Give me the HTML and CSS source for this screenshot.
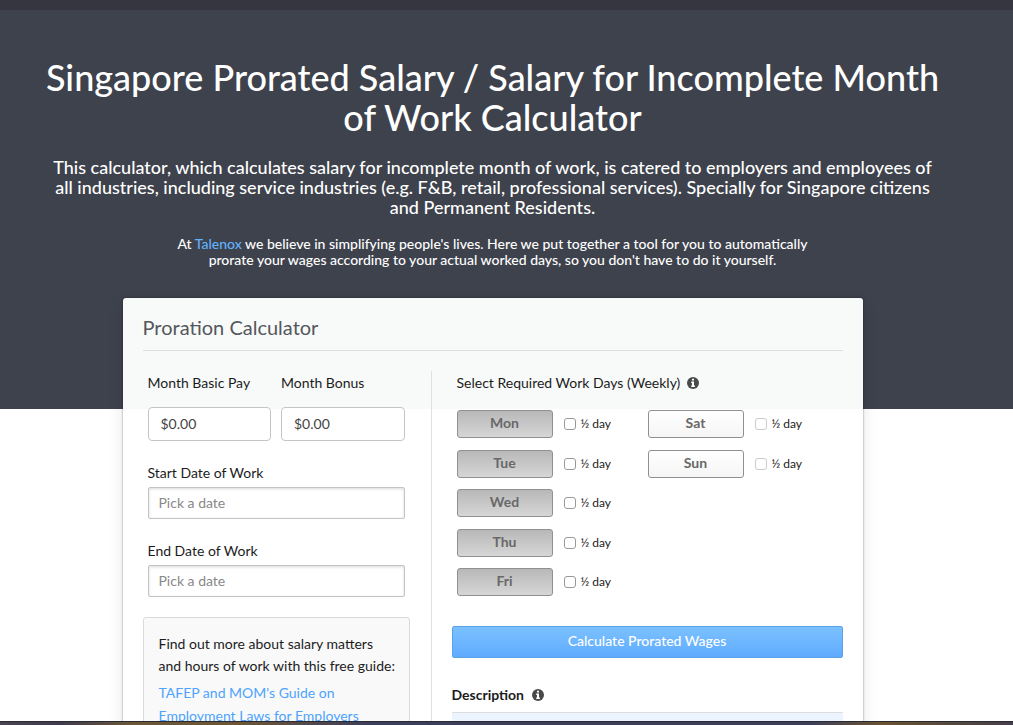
FILE: index.html
```html
<!DOCTYPE html>
<html lang="en">
<head>
<meta charset="utf-8">
<title>Singapore Prorated Salary Calculator</title>
<link rel="stylesheet" href="styles.css">
</head>
<body>
<svg class="sprite" aria-hidden="true">
  <symbol id="info" viewBox="0 0 12 12">
    <circle cx="6" cy="6" r="6" fill="#4a4a4a"/>
    <path fill="#fff" d="M5 1.800h2v1.700H5zM4.200 4.600H7v3.900h.9v1.400H4.200V8.500H5V6h-.8z"/>
  </symbol>
</svg>
<main class="page">
  <div class="topbar"></div>
  <header class="hero">
    <h1>Singapore Prorated Salary / Salary for Incomplete Month<br>of Work Calculator</h1>
    <p class="lead">This calculator, which calculates salary for incomplete month of work, is catered to employers and employees of<br>all industries, including service industries (e.g. F&amp;B, retail, professional services). Specially for Singapore citizens<br>and Permanent Residents.</p>
    <p class="intro">At <a href="#">Talenox</a> we believe in simplifying people's lives. Here we put together a tool for you to automatically<br>prorate your wages according to your actual worked days, so you don't have to do it yourself.</p>
  </header>
  <form class="card">
    <h2>Proration Calculator</h2>
    <div class="columns">
      <div class="left">
        <div class="fields">
          <div class="pair">
            <div class="money"><label for="pay">Month Basic Pay</label><input id="pay" type="text" value="$0.00"></div>
            <div class="money"><label for="bonus">Month Bonus</label><input id="bonus" type="text" value="$0.00"></div>
          </div>
          <div class="date"><label for="start">Start Date of Work</label><input id="start" type="text" placeholder="Pick a date"></div>
          <div class="date"><label for="end">End Date of Work</label><input id="end" type="text" placeholder="Pick a date"></div>
        </div>
        <aside class="guide">
          <p>Find out more about salary matters<br>and hours of work with this free guide:</p>
          <a href="#">TAFEP and MOM's Guide on<br>Employment Laws for Employers</a>
        </aside>
      </div>
      <div class="right">
        <div class="days-title">Select Required Work Days (Weekly) <svg class="info"><use href="#info"/></svg></div>
        <div class="days">
          <div class="day"><button type="button" class="toggle on">Mon</button><label><input type="checkbox">½ day</label></div>
          <div class="day"><button type="button" class="toggle on">Tue</button><label><input type="checkbox">½ day</label></div>
          <div class="day"><button type="button" class="toggle on">Wed</button><label><input type="checkbox">½ day</label></div>
          <div class="day"><button type="button" class="toggle on">Thu</button><label><input type="checkbox">½ day</label></div>
          <div class="day"><button type="button" class="toggle on">Fri</button><label><input type="checkbox">½ day</label></div>
          <div class="day"><button type="button" class="toggle">Sat</button><label><input type="checkbox" disabled>½ day</label></div>
          <div class="day"><button type="button" class="toggle">Sun</button><label><input type="checkbox" disabled>½ day</label></div>
        </div>
        <button type="button" class="calculate">Calculate Prorated Wages</button>
        <h3>Description <svg class="info"><use href="#info"/></svg></h3>
        <div class="results"></div>
      </div>
    </div>
  </form>
</main>
<div class="backdrop"></div>
</body>
</html>
```
FILE: styles.css
```css
* { box-sizing: border-box; }
body {
  margin: 0;
  height: 100vh;
  display: flex;
  flex-direction: column;
  overflow: hidden;
  font: 14px/24px Lato, "Open Sans", sans-serif;
  color: #1c1c1c;
  background: #fff;
}
h1, h2, h3, p { margin: 0; font-weight: 400; }
a { color: #4da3ff; text-decoration: none; }
input, button { font: inherit; }
.sprite { display: none; }
.page { flex: 1; min-height: 0; overflow: hidden; }
.topbar { height: 10px; background: #35363f; }
.hero {
  padding: 47px 28px 141px 0;
  background: #3e424c;
  color: #fff;
  text-align: center;
  white-space: nowrap;
}
h1 { font-size: 36px; line-height: 40px; font-weight: 500; }
.lead { margin-top: 20px; font-size: 18px; line-height: 20px; font-weight: 500; }
.intro { margin-top: 19px; font-size: 14px; line-height: 16px; font-weight: 500; }
.intro a { color: #62b1ff; }
.card {
  position: relative;
  width: calc(100% - 68px);
  max-width: 740px;
  margin: -111px auto 0;
  left: -14px;
  padding: 15px 20px 40px;
  border-radius: 3px;
  background: linear-gradient(#f8faf9 111px, #fff 111px);
  box-shadow: 0 0 2px rgba(0, 0, 0, .5), 0 4px 16px rgba(0, 0, 0, .1);
}
h2 {
  padding-bottom: 9px;
  border-bottom: 1px solid #dcdfe0;
  font-size: 20px;
  line-height: 28px;
  color: #54575c;
}
.columns { display: flex; margin-top: 20px; }
.left { width: 289px; padding-right: 21px; border-right: 1px solid #e0e0e0; }
.fields { display: flex; flex-direction: column; gap: 20px; padding: 0 5px; }
.pair { display: flex; gap: 10px; }
.money { flex: 1; }
.fields label { display: block; }
.fields input {
  display: block;
  width: 100%;
  border: 1px solid #c4c4c4;
  background: #fff;
  outline: 0;
}
.money input { height: 34px; margin-top: 12px; padding: 0 12px 2px; border-radius: 4px; color: #444; }
.date input {
  height: 32px;
  margin-top: 2px;
  padding: 0 10px 2px;
  border-radius: 2px;
  box-shadow: inset 0 1px 3px rgba(0, 0, 0, .15);
}
.date input::placeholder { color: #888; opacity: 1; }
.guide {
  margin-top: 20px;
  padding: 15px;
  border: 1px solid #dadada;
  border-radius: 3px;
  background: #f9f9f9;
  line-height: 22px;
  white-space: nowrap;
}
.guide a { display: block; margin-top: 4px; line-height: 23px; }
.right { flex: 1; padding-left: 20px; }
.days-title { padding-left: 5px; }
.info { width: 12px; height: 12px; margin-left: 3px; vertical-align: -1px; }
.days {
  display: grid;
  grid-template-rows: repeat(5, 28px);
  grid-auto-flow: column;
  grid-auto-columns: 191px;
  align-content: space-between;
  height: 186px;
  margin-top: 15px;
  padding-left: 5px;
}
.day { display: flex; align-items: center; gap: 11px; }
.day label { display: flex; align-items: center; gap: 5px; font-size: 12px; }
.day input {
  appearance: none;
  width: 12px;
  height: 12px;
  margin: 0;
  border: 1px solid #999;
  border-radius: 3px;
  background: #fff;
}
.day input:disabled { border-color: #ccc; }
.toggle {
  width: 96px;
  height: 28px;
  padding: 0 0 2px;
  border: 1px solid #909090;
  border-radius: 3px;
  background: linear-gradient(#fff, #f5f5f5);
  font-weight: 700;
  color: #686868;
}
.toggle.on { background: linear-gradient(#b8b8b8, #d6d6d6); }
.calculate {
  display: block;
  width: 100%;
  height: 32px;
  margin-top: 30px;
  padding: 0 0 2px;
  border: 1px solid #5ba3e6;
  border-radius: 2px;
  background: linear-gradient(#7bc1ff, #60abff);
  color: #fff;
  font-weight: 500;
}
h3 { margin-top: 25px; font-size: 14px; font-weight: 700; }
h3 .info { margin-left: 5px; }
.results { height: 40px; margin-top: 5px; border-top: 1px solid #dedede; background: #ecf5ff; }
.backdrop {
  height: 4px;
  border-top: 1px solid #292a35;
  background: linear-gradient(90deg, #4b4450, #3f3b4e 6%, #6b5636 13%, #6b5636 24%, #3d3f5a 36%, #3d3f5a 80%, #69532f 87%, #453f4b);
}
```
